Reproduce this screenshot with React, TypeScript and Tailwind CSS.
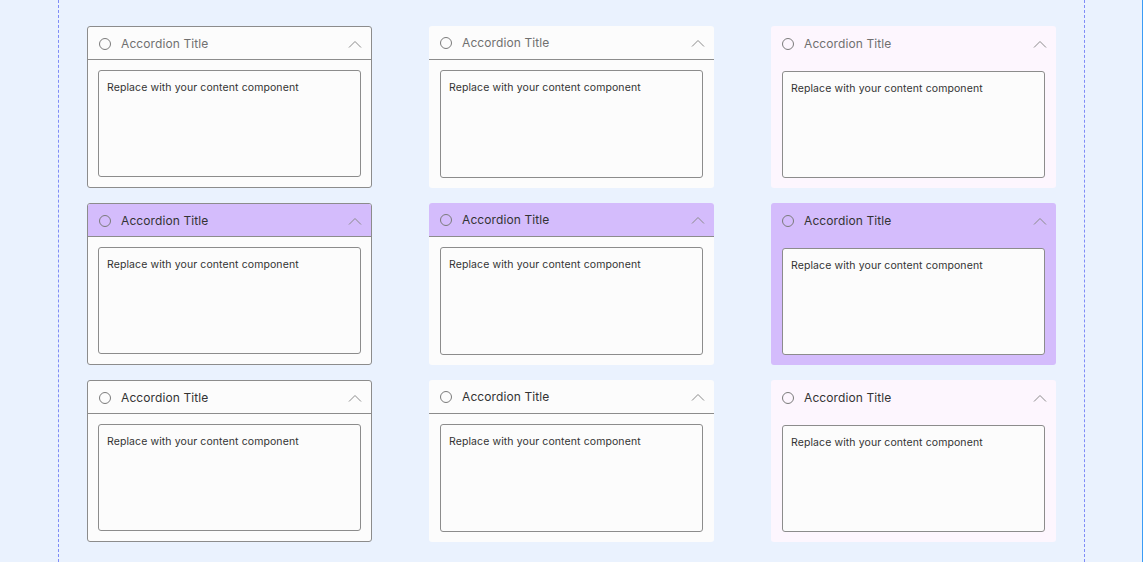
import React from 'react';

type Variant = {
  border: boolean;
  bg: string;
  headerBg: string;
  divider: boolean;
  titleColor: string;
};

const Circle = () => (
  <svg width="14" height="14" viewBox="0 0 14 14" className="shrink-0">
    <circle cx="7" cy="7" r="5.5" fill="none" stroke="#7a7a7a" strokeWidth="1" />
  </svg>
);

const Chevron = () => (
  <svg width="14" height="8" viewBox="0 0 14 8" className="shrink-0">
    <path d="M1 7.5L7 1.5L13 7.5" fill="none" stroke="#8a8a8a" strokeWidth="1" />
  </svg>
);

const AccordionCard = ({ v }: { v: Variant }) => (
  <div
    className={`flex h-[162px] w-[285px] flex-col overflow-hidden rounded-[3px] ${v.bg} ${
      v.border ? 'border border-[#8c8c8c]' : ''
    }`}
  >
    <div
      className={`flex shrink-0 items-center pl-[10px] pr-[9px] pt-px ${v.headerBg} ${
        v.divider ? 'border-b border-[#8c8c8c]' : ''
      } ${v.border ? 'h-[33px]' : 'h-[34px]'}`}
    >
      <Circle />
      <span className={`ml-[9px] flex-1 text-[12px] tracking-[0.1px] ${v.titleColor}`}>
        Accordion Title
      </span>
      <Chevron />
    </div>
    <div
      className={`mb-[10px] flex-1 rounded-[3px] border border-[#8c8c8c] bg-[#fcfcfc] pl-[8px] pt-[9px] text-[10.5px] tracking-[0.1px] text-[#333] ${
        v.border ? 'mx-[10px]' : 'mx-[11px]'
      } ${v.divider ? 'mt-[10px]' : 'mt-[11px]'}`}
    >
      Replace with your content component
    </div>
  </div>
);

const plain: Variant[] = [
  { border: true, bg: 'bg-[#fcfcfc]', headerBg: '', divider: true, titleColor: 'text-[#707070]' },
  { border: false, bg: 'bg-[#fcfcfc]', headerBg: '', divider: true, titleColor: 'text-[#707070]' },
  { border: false, bg: 'bg-[#fdf6fe]', headerBg: '', divider: false, titleColor: 'text-[#707070]' },
];

const active: Variant[] = [
  { border: true, bg: 'bg-[#fcfcfc]', headerBg: 'bg-[#d4bcfc]', divider: true, titleColor: 'text-[#333]' },
  { border: false, bg: 'bg-[#fcfcfc]', headerBg: 'bg-[#d4bcfc]', divider: true, titleColor: 'text-[#333]' },
  { border: false, bg: 'bg-[#d4bcfc]', headerBg: '', divider: false, titleColor: 'text-[#333]' },
];

const last: Variant[] = plain.map((p) => ({ ...p, titleColor: 'text-[#333]' }));

export default function App() {
  const rows = [plain, active, last];
  return (
    <div
      className="flex h-[562px] w-[1143px] overflow-hidden bg-[#eaf2fe]"
      style={{ fontFamily: 'Inter, "Open Sans", sans-serif' }}
    >
      <div className="w-[58px] shrink-0" />
      <div className="flex w-[1027px] shrink-0 flex-col gap-[15px] border-x border-dashed border-x-[#7f8cf7] pl-[28px] pt-[26px]">
        {rows.map((row, i) => (
          <div key={i} className="flex gap-[57px]">
            {row.map((v, j) => (
              <AccordionCard key={j} v={v} />
            ))}
          </div>
        ))}
      </div>
      <div className="flex-1" />
      <div className="w-px shrink-0 bg-[#3b9cf5]" />
    </div>
  );
}
